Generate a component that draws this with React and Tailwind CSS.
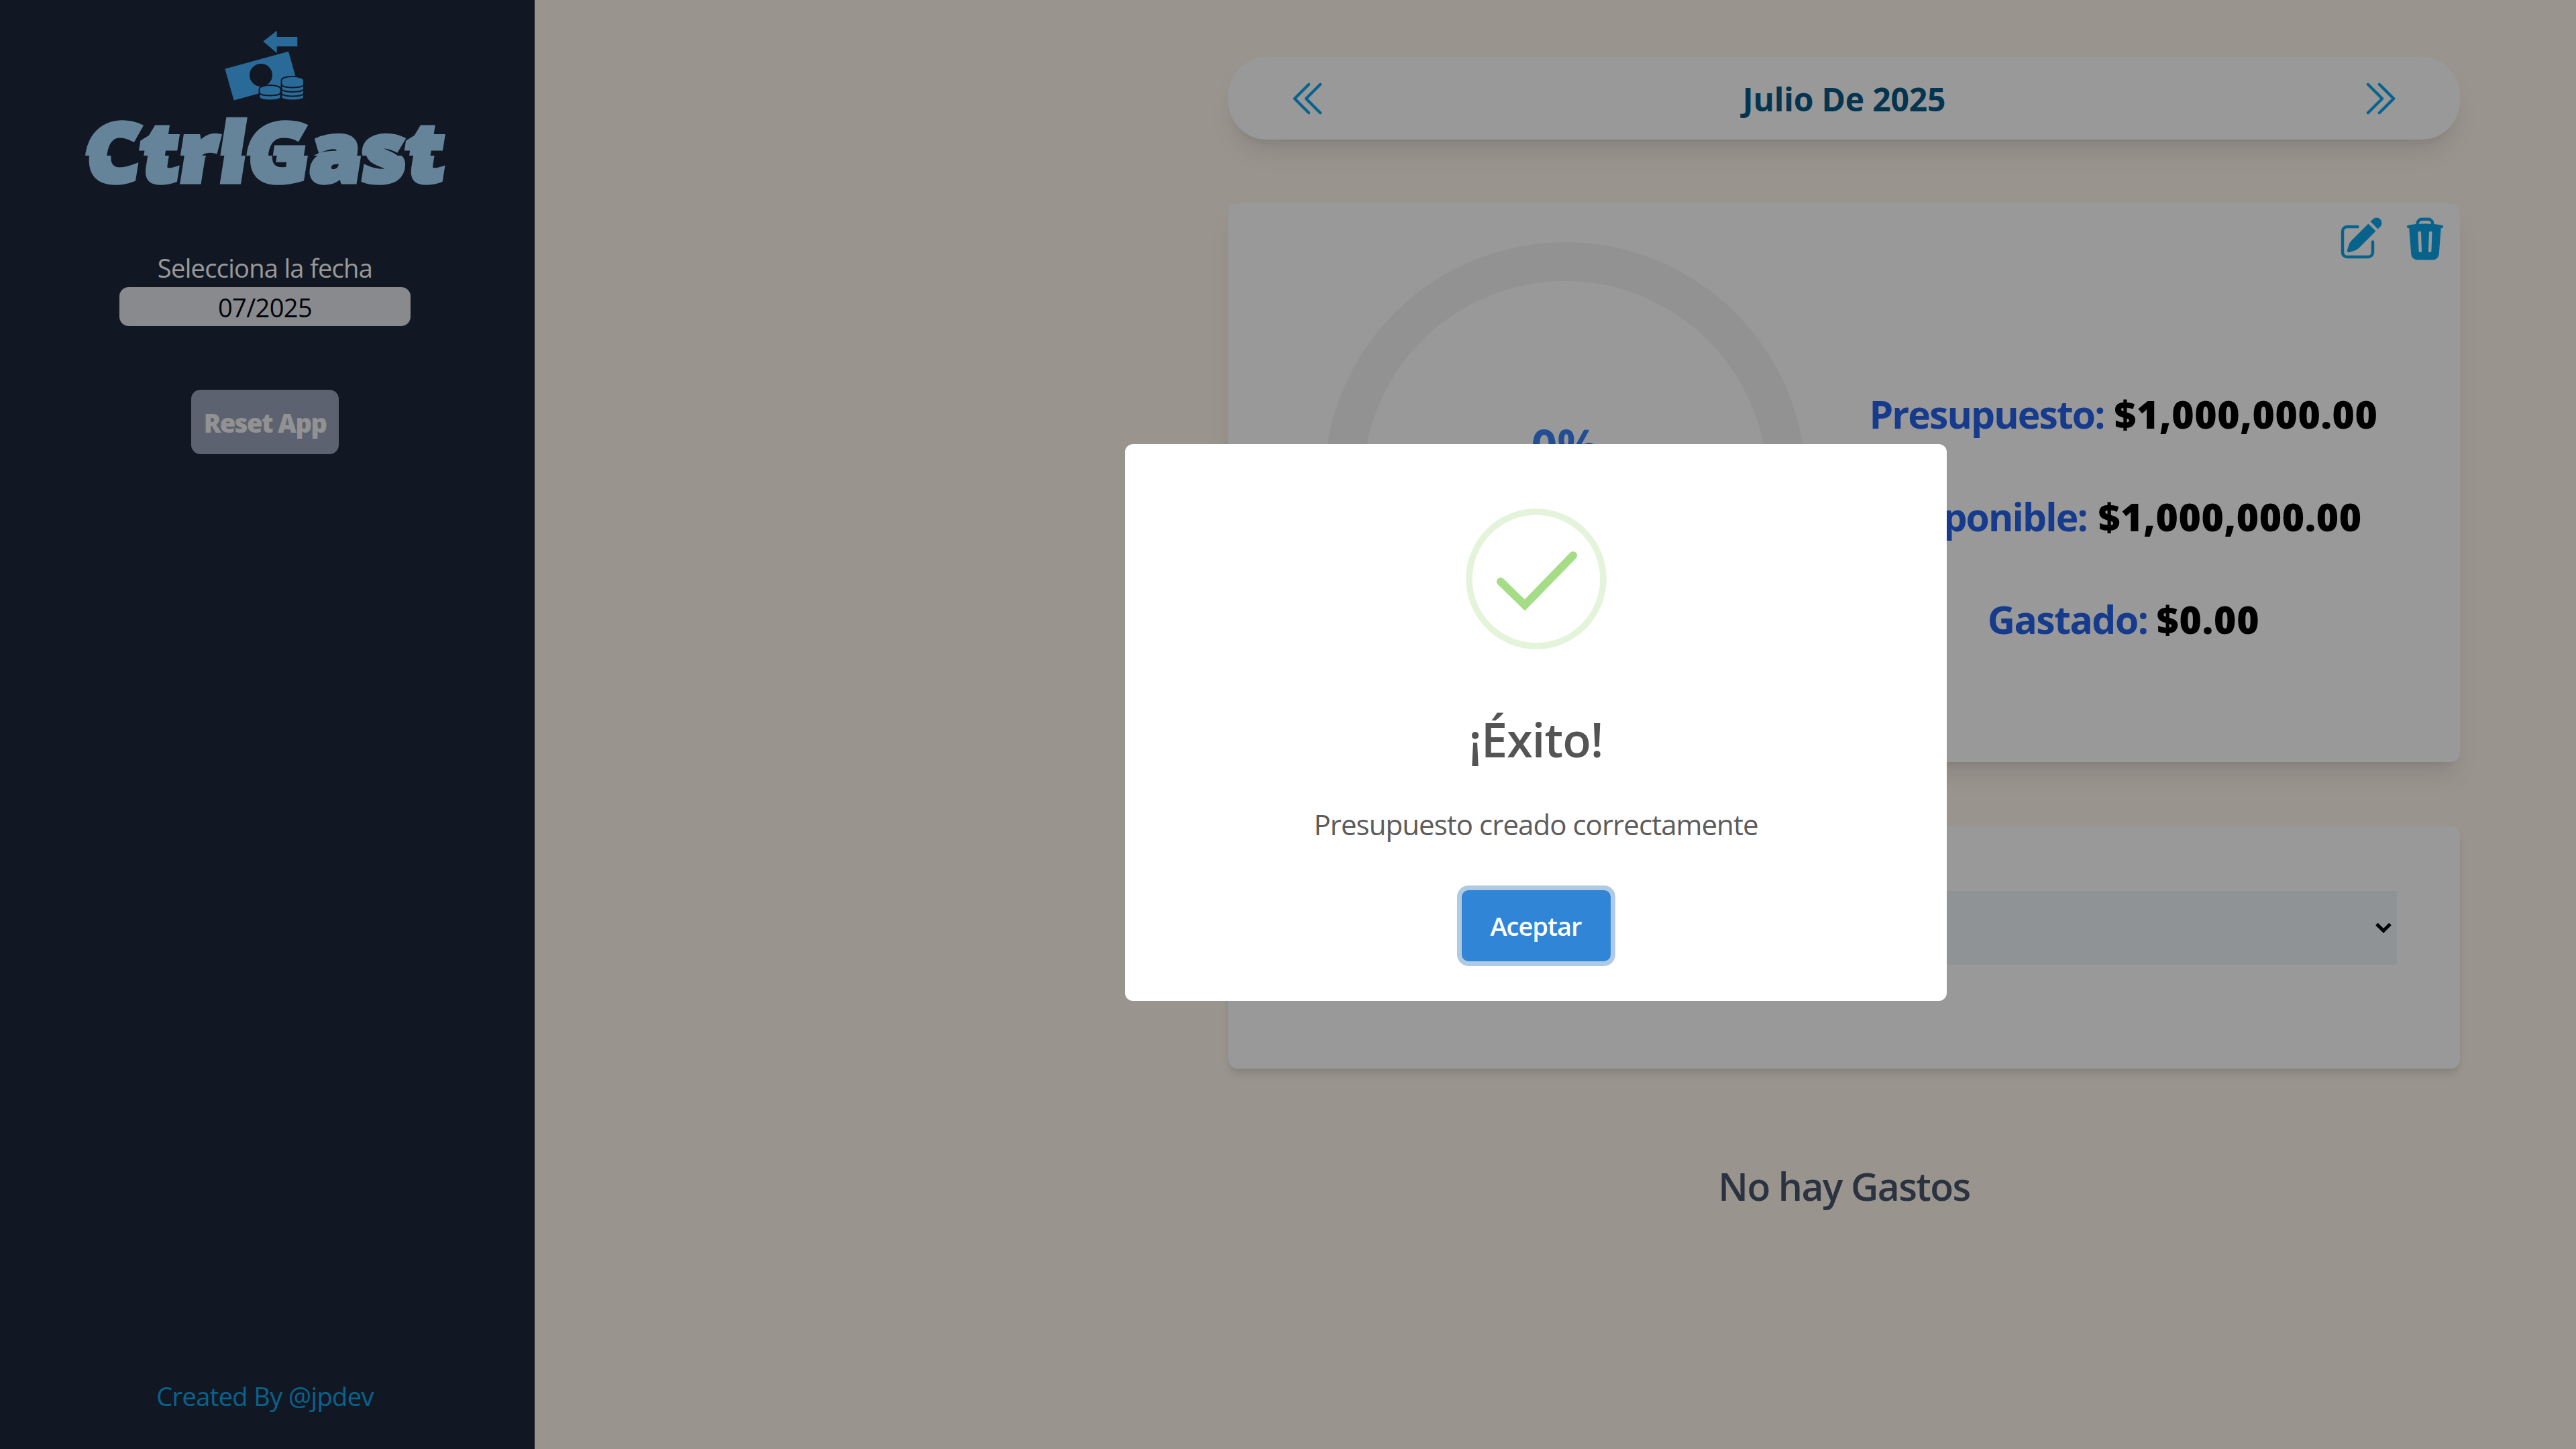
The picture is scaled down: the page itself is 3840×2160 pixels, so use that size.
import { useState } from "react";
import {
  HiOutlineChevronDoubleLeft,
  HiOutlineChevronDoubleRight,
  HiPencilSquare,
  HiTrash,
} from "react-icons/hi2";

const formatMoney = (value) => value.toLocaleString("en-US", { style: "currency", currency: "USD" });

function Logo() {
  return (
    <svg viewBox="117 35 558 260" className="w-[558px] h-[260px] shrink-0">
      <defs>
        <clipPath id="logo-top">
          <rect x="100" y="160" width="600" height="72" />
        </clipPath>
        <clipPath id="logo-bottom">
          <rect x="100" y="232" width="600" height="63" />
        </clipPath>
        <text
          id="logo-name"
          transform="translate(122 271) skewX(-9)"
          textLength="536"
          lengthAdjust="spacingAndGlyphs"
          fontSize="122"
          fontWeight="800"
          fill="#a8daff"
          stroke="#a8daff"
          strokeWidth="7"
          className="font-['Open_Sans',sans-serif]"
        >
          CtrlGast
        </text>
      </defs>

      {/* arrow */}
      <path d="M393.3 61.7 413.7 45.7V55H444.3V69.3H413.7V79Z" fill="#46b1ff" />
      {/* bill */}
      <path d="M337 103 430.7 77.3 443.7 123.3 350 149Z" fill="#46b1ff" stroke="#46b1ff" strokeLinejoin="round" />
      <circle cx="390" cy="112" r="17" fill="#1e293b" />
      {/* coins */}
      <g fill="#46b1ff" stroke="#1e293b" strokeWidth="2">
        <path d="M387.500 133c0-8 32-8 32 0v12c0 6-32 6-32 0z" />
        <path d="M420.500 120c0-8 33.500-8 33.500 0v25c0 6-33.500 6-33.500 0z" />
        <path d="M387.500 138c2 6 30 6 32 0M420.500 126c2 6 31.500 6 33.500 0M420.500 132.500c2 6 31.500 6 33.500 0M420.500 139c2 6 31.500 6 33.500 0" fill="none" />
      </g>

      <g clipPath="url(#logo-top)">
        <use href="#logo-name" x="-3" />
      </g>
      <g clipPath="url(#logo-bottom)">
        <use href="#logo-name" x="3" />
      </g>
    </svg>
  );
}

function Sidebar({ date, onReset }) {
  return (
    <aside className="flex flex-col items-center w-[797px] h-full shrink-0 bg-[#1e293b] pt-[35px] pb-[50px] pr-[7px]">
      <Logo />
      <label className="mt-[75px] text-[38px] leading-[58px] tracking-[-0.7px] text-white">Selecciona la fecha</label>
      <div className="w-[434px] h-[58px] rounded-[14px] bg-gray-200 text-center text-[38px] leading-[60px] tracking-[-0.6px] text-gray-950">
        {date}
      </div>
      <button
        className="mt-[95px] w-[220px] h-[96px] pt-[2px] rounded-[14px] bg-[#99a4bb] text-[38px] font-extrabold tracking-[-1.5px] text-[#f3f4f6]"
        onClick={onReset}
      >
        Reset App
      </button>
      <p className="mt-auto text-[38px] leading-[58px] tracking-[-0.6px] text-[#0ea5e9]">Created By @jpdev</p>
    </aside>
  );
}

function MonthNav({ title }) {
  return (
    <div className="flex items-center justify-between h-[123px] px-[84px] rounded-[57px] bg-white shadow-[0_24px_36px_-7px_rgb(0_0_0/0.1),0_10px_14px_-10px_rgb(0_0_0/0.1)]">
      <HiOutlineChevronDoubleLeft className="size-[68px] text-[#0ea5e9]" />
      <h2 className="pt-[2px] text-[48px] font-bold tracking-[-0.2px] text-[#075985]">{title}</h2>
      <HiOutlineChevronDoubleRight className="size-[68px] text-[#0ea5e9]" />
    </div>
  );
}

function BudgetCard({ budget, spent }) {
  const percent = Math.round((spent / budget) * 100);

  return (
    <section className="relative grid grid-cols-2 gap-[22px] h-[833px] mt-[95px] px-[96px] rounded-[14px] bg-white shadow-[0_24px_36px_-7px_rgb(0_0_0/0.1),0_10px_14px_-10px_rgb(0_0_0/0.1)]">
      <div className="absolute top-[17px] right-[16px] flex gap-6 text-[#0ea5e9]">
        <HiPencilSquare className="size-[72px]" />
        <HiTrash className="size-[72px]" />
      </div>

      <div className="flex items-center justify-center">
        <div className="flex flex-col items-center size-[718px] rounded-full border-[58px] border-[#f4f4f4] pt-[200px]">
          <span className="text-[68px] leading-[90px] font-bold text-[#3b82f6]">{percent}%</span>
        </div>
      </div>

      <div className="flex flex-col items-center justify-center gap-[76px] pt-[102px] text-[57px] leading-[77px] font-bold text-[#2563eb]">
        <p className="tracking-[-1.9px]">
          Presupuesto:{" "}
          <span className="ml-[2px] font-black tracking-[0.6px] text-black">{formatMoney(budget)}</span>
        </p>
        <p className="pl-[4px] tracking-[-1.9px]">
          Disponible:{" "}
          <span className="ml-[4px] font-black tracking-[0.6px] text-black">{formatMoney(budget - spent)}</span>
        </p>
        <p className="tracking-[-1.5px]">
          Gastado:{" "}
          <span className="font-black tracking-[0.8px] text-black">{formatMoney(spent)}</span>
        </p>
      </div>
    </section>
  );
}

function FilterCard() {
  return (
    <section className="h-[361px] mt-[96px] py-[96px] pl-[96px] pr-[94px] rounded-[14px] bg-white shadow-[0_10px_14px_-2px_rgb(0_0_0/0.1),0_5px_10px_-5px_rgb(0_0_0/0.1)]">
      <div className="flex items-center justify-end h-[110px] pr-[7px] bg-[#eef6fa]">
        <svg viewBox="0 0 26 18" className="w-[26px] h-[18px]" fill="none" stroke="black" strokeWidth="5">
          <path d="M3 3.500 13 13.500 23 3.500" />
        </svg>
      </div>
    </section>
  );
}

function SuccessModal({ onClose }) {
  return (
    <div className="fixed inset-0 flex items-center justify-center pl-[739px] pb-[6px] bg-black/40">
      <div className="flex flex-col items-center w-[1225px] h-[830px] pt-[96px] rounded-[12px] bg-white text-[#545454]">
        <svg viewBox="0 0 210 210" className="size-[210px]" fill="none">
          <circle cx="105" cy="105" r="100" stroke="#e4f4da" strokeWidth="9.500" />
          <path d="M52 109 88 144 160 70" stroke="#a5dc86" strokeWidth="12" strokeLinecap="round" />
        </svg>
        <h2 className="mt-[85px] text-[70px] leading-[98px] font-semibold tracking-[-0.9px]">¡Éxito!</h2>
        <p className="mt-[48px] text-[42px] leading-[60px] tracking-[-0.95px] text-[#5c5c5c]">Presupuesto creado correctamente</p>
        <button
          className="mt-[68px] w-[222px] h-[106px] rounded-[10px] bg-[#3085d6] ring-[7px] ring-[#b1cae3] text-[38px] font-semibold tracking-[-1px] text-white"
          onClick={onClose}
        >
          Aceptar
        </button>
      </div>
    </div>
  );
}

export default function App() {
  const [showModal, setShowModal] = useState(true);
  const [budget] = useState(1000000);
  const [expenses, setExpenses] = useState([]);
  const spent = expenses.reduce((total, expense) => total + expense.amount, 0);

  return (
    <div className="flex h-screen overflow-hidden bg-[#fff7ed] font-['Open_Sans',sans-serif]">
      <Sidebar date="07/2025" onReset={() => setExpenses([])} />

      <main className="flex flex-1 justify-end pt-[85px] pr-[173px]">
        <div className="w-[1836px]">
          <MonthNav title="Julio De 2025" />
          <BudgetCard budget={budget} spent={spent} />
          <FilterCard />
          {expenses.length === 0 && (
            <p className="mt-[137px] text-center text-[57px] leading-[77px] font-semibold tracking-[-1.6px] text-[#475569]">
              No hay Gastos
            </p>
          )}
        </div>
      </main>

      {showModal && <SuccessModal onClose={() => setShowModal(false)} />}
    </div>
  );
}
